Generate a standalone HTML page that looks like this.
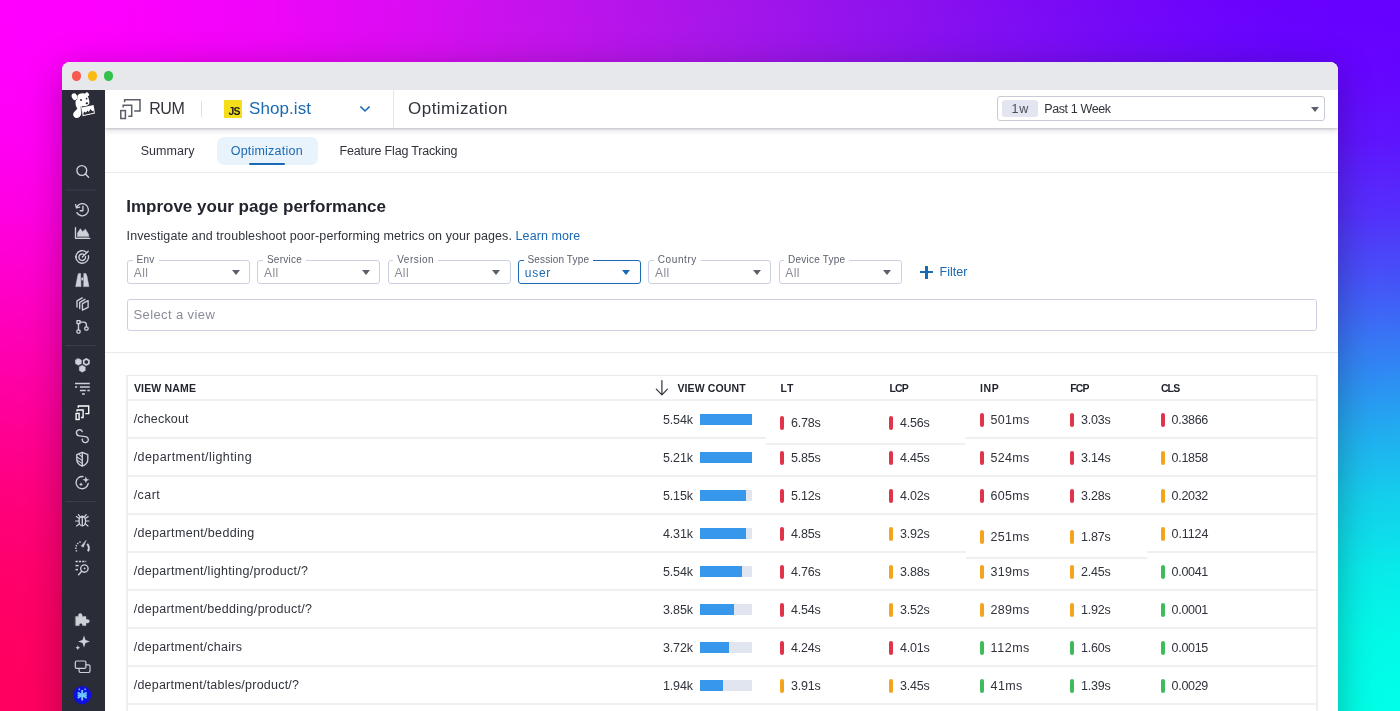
<!DOCTYPE html>
<html lang="en">
<head>
<meta charset="utf-8">
<title>RUM Optimization</title>
<style>
*{box-sizing:border-box;margin:0;padding:0}
html,body{width:1400px;height:711px;overflow:hidden}
body{position:relative;font-family:"Liberation Sans",sans-serif;color:#22252e;background:#ff00af}
.bgL{position:absolute;left:0;top:0;width:1400px;height:711px;background:linear-gradient(to bottom,#ff00ff 0%,#ff00fc 10%,#ff00f2 20%,#ff00e1 30%,#ff00c9 40%,#ff00af 50%,#ff0095 60%,#ff007d 70%,#ff006c 80%,#ff0062 90%,#ff005f 100%)}
.bgR{position:absolute;left:0;top:0;width:1400px;height:711px;background:linear-gradient(to bottom,#6600ff 0%,#6405ff 10%,#5e15fd 20%,#5330fb 30%,#4455f7 40%,#3380f4 50%,#22aaf0 60%,#13cfec 70%,#08eaea 80%,#02fae8 90%,#00ffe8 100%);
 -webkit-mask-image:linear-gradient(to right,rgba(0,0,0,0.000) 0%,rgba(0,0,0,0.018) 10%,rgba(0,0,0,0.081) 20%,rgba(0,0,0,0.190) 30%,rgba(0,0,0,0.335) 40%,rgba(0,0,0,0.500) 50%,rgba(0,0,0,0.665) 60%,rgba(0,0,0,0.810) 70%,rgba(0,0,0,0.919) 80%,rgba(0,0,0,0.982) 90%,rgba(0,0,0,1.000) 100%);
 mask-image:linear-gradient(to right,rgba(0,0,0,0.000) 0%,rgba(0,0,0,0.018) 10%,rgba(0,0,0,0.081) 20%,rgba(0,0,0,0.190) 30%,rgba(0,0,0,0.335) 40%,rgba(0,0,0,0.500) 50%,rgba(0,0,0,0.665) 60%,rgba(0,0,0,0.810) 70%,rgba(0,0,0,0.919) 80%,rgba(0,0,0,0.982) 90%,rgba(0,0,0,1.000) 100%)}
.bgH{position:absolute;left:0;top:0;width:1400px;height:711px;background:linear-gradient(to right,rgba(128,128,128,0) 6%,rgba(128,128,128,.03) 16%,rgba(128,128,128,.075) 25%,rgba(128,128,128,.14) 37%,rgba(128,128,128,.17) 50%,rgba(128,128,128,.14) 63%,rgba(128,128,128,.075) 76%,rgba(128,128,128,.03) 85%,rgba(128,128,128,0) 95%)}
.win{position:absolute;left:62px;top:62px;width:1276px;height:700px;border-radius:8px 8px 0 0;overflow:hidden;background:#fff;box-shadow:0 8px 36px rgba(0,0,0,.28)}
.pg{position:absolute;left:-62px;top:-62px;width:1400px;height:800px;will-change:transform}
.pg div,.pg svg{position:absolute}
.titlebar{left:62px;top:62px;width:1276px;height:28px;background:#e7e8eb}
.dot{width:9.6px;height:9.6px;border-radius:50%;top:71.2px}
.sidebar{left:62px;top:90px;width:43px;height:700px;background:#2a2d38}
.header{left:105px;top:90px;width:1233px;height:38px;background:#fff;box-shadow:0 1px 2px rgba(20,25,40,.15),0 2px 6px rgba(20,25,40,.17)}
.t{white-space:nowrap}
.fbox{top:260px;width:123px;height:24px;border:1px solid #cbd0e2;border-radius:3px;background:#fff}
.caret{width:0;height:0;border-left:4.5px solid transparent;border-right:4.5px solid transparent;border-top:5px solid #5c606d}
.hline{left:127px;width:1190px;height:2px;background:#eff0f4;margin-top:-1px}
</style>
</head>
<body>
<div class="bgL"></div>
<div class="bgR"></div>
<div class="bgH"></div>
<div class="win"><div class="pg">
  <div class="header"></div>
  <div class="titlebar"></div>
  <div class="dot" style="left:71.5px;background:#f7584f"></div>
  <div class="dot" style="left:87.7px;background:#f9ba12"></div>
  <div class="dot" style="left:103.8px;background:#32c14a"></div>
  <div class="sidebar"></div>
  <!-- header pieces -->
  <div class="hd" style="left:200.5px;top:101px;width:1px;height:16px;background:#dfe1e6"></div>
  <div class="hd" style="left:223.5px;top:100px;width:18.5px;height:18px;background:#f5de19"></div>
  <div class="hd t" style="left:228.6px;top:106.4px;font-size:10.4px;line-height:11px;font-weight:700;color:#1c1c1c;letter-spacing:-.9px">JS</div>
  <div class="hd" style="left:393px;top:90px;width:1px;height:38px;background:#e6e7eb"></div>
  <div class="hd" style="left:997px;top:96px;width:328px;height:25px;border:1px solid #c9cbd4;border-radius:3px;background:#fff"></div>
  <div class="hd" style="left:1002px;top:100px;width:36px;height:17px;border-radius:3px;background:#e3e6f1"></div>
  <div class="hd caret" style="left:1310.5px;top:106.5px"></div>
  <!-- tabs -->
  <div style="left:217px;top:136.5px;width:101px;height:28px;border-radius:7px;background:#e9f3fb"></div>
  <div style="left:249px;top:163px;width:36px;height:2px;background:#1a69b3;border-radius:1px"></div>
  <div style="left:105px;top:172px;width:1233px;height:1px;background:#e9eaee"></div>
  <!-- filters -->
  <div class="fbox" style="left:127px"></div><div class="caret" style="left:231.5px;top:270px"></div>
  <div class="fbox" style="left:257.3px"></div><div class="caret" style="left:361.8px;top:270px"></div>
  <div class="fbox" style="left:387.6px"></div><div class="caret" style="left:492.1px;top:270px"></div>
  <div class="fbox" style="left:517.9px;border-color:#1a69b3"></div><div class="caret" style="left:622.4px;top:270px;border-top-color:#1a69b3"></div>
  <div class="fbox" style="left:648.2px"></div><div class="caret" style="left:752.7px;top:270px"></div>
  <div class="fbox" style="left:778.5px"></div><div class="caret" style="left:883px;top:270px"></div>
  <div style="left:920px;top:271px;width:13px;height:2.4px;background:#1a69b3"></div>
  <div style="left:925.3px;top:265.7px;width:2.4px;height:13px;background:#1a69b3"></div>
  <div style="left:127px;top:299px;width:1190px;height:32px;border:1px solid #cbd0e2;border-radius:3px;background:#fff"></div>
  <div style="left:105px;top:352px;width:1233px;height:1px;background:#e9eaee"></div>
  <!-- table frame -->
  <div style="left:126px;top:375px;width:1192px;height:400px;border:2px solid #eeeff5;border-top:1px solid #e9eaef;border-bottom:none"></div>
  <div class="hline" style="top:400px"></div>
  <div class="hline" style="top:438px"></div>
  <div class="hline" style="top:476px"></div>
  <div class="hline" style="top:514px"></div>
  <div class="hline" style="top:552px"></div>
  <div class="hline" style="top:590px"></div>
  <div class="hline" style="top:628px"></div>
  <div class="hline" style="top:666px"></div>
  <div class="hline" style="top:704px"></div>
  <div style="left:766px;top:401px;width:198.5px;height:41.5px;background:#fff"></div>
  <div style="left:766px;top:442.5px;width:198.5px;height:2px;background:#eff0f4"></div>
  <div style="left:965.5px;top:515px;width:181px;height:41.5px;background:#fff"></div>
  <div style="left:965.5px;top:556.5px;width:181px;height:2px;background:#eff0f4"></div>

<div style="left:700px;top:414.0px;width:52px;height:11px;background:#e1e5f0"></div>
<div style="left:700px;top:414.0px;width:52.0px;height:11px;background:#3797ea"></div>
<div style="left:780.2px;top:415.5px;width:4px;height:14px;border-radius:2px;background:#e0334c"></div>
<div style="left:889.2px;top:415.5px;width:4px;height:14px;border-radius:2px;background:#e0334c"></div>
<div style="left:979.7px;top:412.5px;width:4px;height:14px;border-radius:2px;background:#e0334c"></div>
<div style="left:1070.0px;top:412.5px;width:4px;height:14px;border-radius:2px;background:#e0334c"></div>
<div style="left:1160.7px;top:412.5px;width:4px;height:14px;border-radius:2px;background:#e0334c"></div>
<div style="left:700px;top:452.0px;width:52px;height:11px;background:#e1e5f0"></div>
<div style="left:700px;top:452.0px;width:52.0px;height:11px;background:#3797ea"></div>
<div style="left:780.2px;top:450.5px;width:4px;height:14px;border-radius:2px;background:#e0334c"></div>
<div style="left:889.2px;top:450.5px;width:4px;height:14px;border-radius:2px;background:#e0334c"></div>
<div style="left:979.7px;top:450.5px;width:4px;height:14px;border-radius:2px;background:#e0334c"></div>
<div style="left:1070.0px;top:450.5px;width:4px;height:14px;border-radius:2px;background:#e0334c"></div>
<div style="left:1160.7px;top:450.5px;width:4px;height:14px;border-radius:2px;background:#f3a31c"></div>
<div style="left:700px;top:490.0px;width:52px;height:11px;background:#e1e5f0"></div>
<div style="left:700px;top:490.0px;width:45.8px;height:11px;background:#3797ea"></div>
<div style="left:780.2px;top:488.5px;width:4px;height:14px;border-radius:2px;background:#e0334c"></div>
<div style="left:889.2px;top:488.5px;width:4px;height:14px;border-radius:2px;background:#e0334c"></div>
<div style="left:979.7px;top:488.5px;width:4px;height:14px;border-radius:2px;background:#e0334c"></div>
<div style="left:1070.0px;top:488.5px;width:4px;height:14px;border-radius:2px;background:#e0334c"></div>
<div style="left:1160.7px;top:488.5px;width:4px;height:14px;border-radius:2px;background:#f3a31c"></div>
<div style="left:700px;top:528.0px;width:52px;height:11px;background:#e1e5f0"></div>
<div style="left:700px;top:528.0px;width:45.8px;height:11px;background:#3797ea"></div>
<div style="left:780.2px;top:526.5px;width:4px;height:14px;border-radius:2px;background:#e0334c"></div>
<div style="left:889.2px;top:526.5px;width:4px;height:14px;border-radius:2px;background:#f3a31c"></div>
<div style="left:979.7px;top:529.5px;width:4px;height:14px;border-radius:2px;background:#f3a31c"></div>
<div style="left:1070.0px;top:529.5px;width:4px;height:14px;border-radius:2px;background:#f3a31c"></div>
<div style="left:1160.7px;top:526.5px;width:4px;height:14px;border-radius:2px;background:#f3a31c"></div>
<div style="left:700px;top:566.0px;width:52px;height:11px;background:#e1e5f0"></div>
<div style="left:700px;top:566.0px;width:41.6px;height:11px;background:#3797ea"></div>
<div style="left:780.2px;top:564.5px;width:4px;height:14px;border-radius:2px;background:#e0334c"></div>
<div style="left:889.2px;top:564.5px;width:4px;height:14px;border-radius:2px;background:#f3a31c"></div>
<div style="left:979.7px;top:564.5px;width:4px;height:14px;border-radius:2px;background:#f3a31c"></div>
<div style="left:1070.0px;top:564.5px;width:4px;height:14px;border-radius:2px;background:#f3a31c"></div>
<div style="left:1160.7px;top:564.5px;width:4px;height:14px;border-radius:2px;background:#3fbb5a"></div>
<div style="left:700px;top:604.0px;width:52px;height:11px;background:#e1e5f0"></div>
<div style="left:700px;top:604.0px;width:34.1px;height:11px;background:#3797ea"></div>
<div style="left:780.2px;top:602.5px;width:4px;height:14px;border-radius:2px;background:#e0334c"></div>
<div style="left:889.2px;top:602.5px;width:4px;height:14px;border-radius:2px;background:#f3a31c"></div>
<div style="left:979.7px;top:602.5px;width:4px;height:14px;border-radius:2px;background:#f3a31c"></div>
<div style="left:1070.0px;top:602.5px;width:4px;height:14px;border-radius:2px;background:#f3a31c"></div>
<div style="left:1160.7px;top:602.5px;width:4px;height:14px;border-radius:2px;background:#3fbb5a"></div>
<div style="left:700px;top:642.0px;width:52px;height:11px;background:#e1e5f0"></div>
<div style="left:700px;top:642.0px;width:29.1px;height:11px;background:#3797ea"></div>
<div style="left:780.2px;top:640.5px;width:4px;height:14px;border-radius:2px;background:#e0334c"></div>
<div style="left:889.2px;top:640.5px;width:4px;height:14px;border-radius:2px;background:#e0334c"></div>
<div style="left:979.7px;top:640.5px;width:4px;height:14px;border-radius:2px;background:#3fbb5a"></div>
<div style="left:1070.0px;top:640.5px;width:4px;height:14px;border-radius:2px;background:#3fbb5a"></div>
<div style="left:1160.7px;top:640.5px;width:4px;height:14px;border-radius:2px;background:#3fbb5a"></div>
<div style="left:700px;top:680.0px;width:52px;height:11px;background:#e1e5f0"></div>
<div style="left:700px;top:680.0px;width:23.4px;height:11px;background:#3797ea"></div>
<div style="left:780.2px;top:678.5px;width:4px;height:14px;border-radius:2px;background:#f3a31c"></div>
<div style="left:889.2px;top:678.5px;width:4px;height:14px;border-radius:2px;background:#f3a31c"></div>
<div style="left:979.7px;top:678.5px;width:4px;height:14px;border-radius:2px;background:#3fbb5a"></div>
<div style="left:1070.0px;top:678.5px;width:4px;height:14px;border-radius:2px;background:#3fbb5a"></div>
<div style="left:1160.7px;top:678.5px;width:4px;height:14px;border-radius:2px;background:#3fbb5a"></div>
<div class="t" style="left:149.2px;top:97.9px;font-size:16px;line-height:22px;letter-spacing:-0.42px;color:#30333c;">RUM</div>
<div class="t" style="left:249.0px;top:96.8px;font-size:17px;line-height:24px;letter-spacing:0.08px;color:#1a69b3;">Shop.ist</div>
<div class="t" style="left:408.1px;top:96.7px;font-size:17px;line-height:24px;letter-spacing:0.45px;color:#30333c;">Optimization</div>
<div class="t" style="left:1011.4px;top:99.6px;font-size:12.5px;line-height:18px;letter-spacing:0.87px;color:#4a4e5a;">1w</div>
<div class="t" style="left:1044.2px;top:99.6px;font-size:12.5px;line-height:18px;letter-spacing:-0.38px;color:#30333c;">Past 1 Week</div>
<div class="t" style="left:140.7px;top:141.6px;font-size:12.5px;line-height:18px;letter-spacing:0.06px;color:#30333c;">Summary</div>
<div class="t" style="left:230.7px;top:141.6px;font-size:12.5px;line-height:18px;letter-spacing:0.22px;color:#1a69b3;">Optimization</div>
<div class="t" style="left:339.5px;top:141.6px;font-size:12.5px;line-height:18px;letter-spacing:-0.18px;color:#30333c;">Feature Flag Tracking</div>
<div class="t" style="left:126.2px;top:195.0px;font-size:17px;line-height:24px;letter-spacing:-0.00px;color:#22252e;font-weight:700;">Improve your page performance</div>
<div class="t" style="left:126.6px;top:227.3px;font-size:12.5px;line-height:18px;letter-spacing:0.09px;color:#30333c;">Investigate and troubleshoot poor-performing metrics on your pages.</div>
<div class="t" style="left:515.6px;top:227.3px;font-size:12.5px;line-height:18px;letter-spacing:0.07px;color:#1a69b3;">Learn more</div>
<div class="t" style="left:136.6px;top:253.1px;font-size:10px;line-height:14px;letter-spacing:0.23px;color:#5c606d;background:#fff;padding:0 4px;margin-left:-4px;">Env</div>
<div class="t" style="left:133.8px;top:265.0px;font-size:12px;line-height:17px;letter-spacing:0.43px;color:#8a8d98;">All</div>
<div class="t" style="left:266.9px;top:253.1px;font-size:10px;line-height:14px;letter-spacing:0.27px;color:#5c606d;background:#fff;padding:0 4px;margin-left:-4px;">Service</div>
<div class="t" style="left:264.1px;top:265.0px;font-size:12px;line-height:17px;letter-spacing:0.43px;color:#8a8d98;">All</div>
<div class="t" style="left:397.2px;top:253.1px;font-size:10px;line-height:14px;letter-spacing:0.52px;color:#5c606d;background:#fff;padding:0 4px;margin-left:-4px;">Version</div>
<div class="t" style="left:394.4px;top:265.0px;font-size:12px;line-height:17px;letter-spacing:0.43px;color:#8a8d98;">All</div>
<div class="t" style="left:527.5px;top:253.1px;font-size:10px;line-height:14px;letter-spacing:0.15px;color:#5c606d;background:#fff;padding:0 4px;margin-left:-4px;">Session Type</div>
<div class="t" style="left:524.8px;top:265.0px;font-size:12px;line-height:17px;letter-spacing:0.72px;color:#1a69b3;">user</div>
<div class="t" style="left:657.8px;top:253.1px;font-size:10px;line-height:14px;letter-spacing:0.58px;color:#5c606d;background:#fff;padding:0 4px;margin-left:-4px;">Country</div>
<div class="t" style="left:655.0px;top:265.0px;font-size:12px;line-height:17px;letter-spacing:0.43px;color:#8a8d98;">All</div>
<div class="t" style="left:788.1px;top:253.1px;font-size:10px;line-height:14px;letter-spacing:0.22px;color:#5c606d;background:#fff;padding:0 4px;margin-left:-4px;">Device Type</div>
<div class="t" style="left:785.3px;top:265.0px;font-size:12px;line-height:17px;letter-spacing:0.43px;color:#8a8d98;">All</div>
<div class="t" style="left:939.5px;top:263.0px;font-size:12.5px;line-height:18px;letter-spacing:0.01px;color:#1a69b3;">Filter</div>
<div class="t" style="left:133.5px;top:306.2px;font-size:13px;line-height:18px;letter-spacing:0.39px;color:#8a8d98;">Select a view</div>
<div class="t" style="left:133.9px;top:380.5px;font-size:10.5px;line-height:15px;letter-spacing:0.17px;color:#22252e;font-weight:700;">VIEW NAME</div>
<div class="t" style="left:677.4px;top:380.5px;font-size:10.5px;line-height:15px;letter-spacing:0.13px;color:#22252e;font-weight:700;">VIEW COUNT</div>
<div class="t" style="left:780.4px;top:380.5px;font-size:10.5px;line-height:15px;letter-spacing:0.99px;color:#22252e;font-weight:700;">LT</div>
<div class="t" style="left:889.4px;top:380.5px;font-size:10.5px;line-height:15px;letter-spacing:-0.78px;color:#22252e;font-weight:700;">LCP</div>
<div class="t" style="left:979.9px;top:380.5px;font-size:10.5px;line-height:15px;letter-spacing:0.67px;color:#22252e;font-weight:700;">INP</div>
<div class="t" style="left:1070.2px;top:380.5px;font-size:10.5px;line-height:15px;letter-spacing:-0.88px;color:#22252e;font-weight:700;">FCP</div>
<div class="t" style="left:1160.9px;top:380.5px;font-size:10.5px;line-height:15px;letter-spacing:-0.88px;color:#22252e;font-weight:700;">CLS</div>
<div class="t" style="left:133.7px;top:410.4px;font-size:12.5px;line-height:18px;letter-spacing:0.17px;color:#30333c;">/checkout</div>
<div class="t" style="left:663.0px;top:410.5px;font-size:12.5px;line-height:18px;letter-spacing:-0.16px;color:#30333c;">5.54k</div>
<div class="t" style="left:791.1px;top:413.5px;font-size:12.5px;line-height:18px;letter-spacing:-0.21px;color:#30333c;">6.78s</div>
<div class="t" style="left:900.1px;top:413.5px;font-size:12.5px;line-height:18px;letter-spacing:-0.21px;color:#30333c;">4.56s</div>
<div class="t" style="left:990.6px;top:410.5px;font-size:12.5px;line-height:18px;letter-spacing:0.30px;color:#30333c;">501ms</div>
<div class="t" style="left:1080.9px;top:410.5px;font-size:12.5px;line-height:18px;letter-spacing:-0.21px;color:#30333c;">3.03s</div>
<div class="t" style="left:1171.6px;top:410.5px;font-size:12.5px;line-height:18px;letter-spacing:-0.30px;color:#30333c;">0.3866</div>
<div class="t" style="left:133.7px;top:448.4px;font-size:12.5px;line-height:18px;letter-spacing:0.43px;color:#30333c;">/department/lighting</div>
<div class="t" style="left:663.0px;top:448.5px;font-size:12.5px;line-height:18px;letter-spacing:-0.16px;color:#30333c;">5.21k</div>
<div class="t" style="left:791.1px;top:448.5px;font-size:12.5px;line-height:18px;letter-spacing:-0.21px;color:#30333c;">5.85s</div>
<div class="t" style="left:900.1px;top:448.5px;font-size:12.5px;line-height:18px;letter-spacing:-0.21px;color:#30333c;">4.45s</div>
<div class="t" style="left:990.6px;top:448.5px;font-size:12.5px;line-height:18px;letter-spacing:0.30px;color:#30333c;">524ms</div>
<div class="t" style="left:1080.9px;top:448.5px;font-size:12.5px;line-height:18px;letter-spacing:-0.21px;color:#30333c;">3.14s</div>
<div class="t" style="left:1171.6px;top:448.5px;font-size:12.5px;line-height:18px;letter-spacing:-0.30px;color:#30333c;">0.1858</div>
<div class="t" style="left:133.7px;top:486.4px;font-size:12.5px;line-height:18px;letter-spacing:0.43px;color:#30333c;">/cart</div>
<div class="t" style="left:663.0px;top:486.5px;font-size:12.5px;line-height:18px;letter-spacing:-0.16px;color:#30333c;">5.15k</div>
<div class="t" style="left:791.1px;top:486.5px;font-size:12.5px;line-height:18px;letter-spacing:-0.21px;color:#30333c;">5.12s</div>
<div class="t" style="left:900.1px;top:486.5px;font-size:12.5px;line-height:18px;letter-spacing:-0.21px;color:#30333c;">4.02s</div>
<div class="t" style="left:990.6px;top:486.5px;font-size:12.5px;line-height:18px;letter-spacing:0.30px;color:#30333c;">605ms</div>
<div class="t" style="left:1080.9px;top:486.5px;font-size:12.5px;line-height:18px;letter-spacing:-0.21px;color:#30333c;">3.28s</div>
<div class="t" style="left:1171.6px;top:486.5px;font-size:12.5px;line-height:18px;letter-spacing:-0.30px;color:#30333c;">0.2032</div>
<div class="t" style="left:133.7px;top:524.4px;font-size:12.5px;line-height:18px;letter-spacing:0.33px;color:#30333c;">/department/bedding</div>
<div class="t" style="left:663.0px;top:524.5px;font-size:12.5px;line-height:18px;letter-spacing:-0.16px;color:#30333c;">4.31k</div>
<div class="t" style="left:791.1px;top:524.5px;font-size:12.5px;line-height:18px;letter-spacing:-0.21px;color:#30333c;">4.85s</div>
<div class="t" style="left:900.1px;top:524.5px;font-size:12.5px;line-height:18px;letter-spacing:-0.21px;color:#30333c;">3.92s</div>
<div class="t" style="left:990.6px;top:527.5px;font-size:12.5px;line-height:18px;letter-spacing:0.30px;color:#30333c;">251ms</div>
<div class="t" style="left:1080.9px;top:527.5px;font-size:12.5px;line-height:18px;letter-spacing:-0.21px;color:#30333c;">1.87s</div>
<div class="t" style="left:1171.6px;top:524.5px;font-size:12.5px;line-height:18px;letter-spacing:-0.11px;color:#30333c;">0.1124</div>
<div class="t" style="left:133.7px;top:562.4px;font-size:12.5px;line-height:18px;letter-spacing:0.31px;color:#30333c;">/department/lighting/product/?</div>
<div class="t" style="left:663.0px;top:562.5px;font-size:12.5px;line-height:18px;letter-spacing:-0.16px;color:#30333c;">5.54k</div>
<div class="t" style="left:791.1px;top:562.5px;font-size:12.5px;line-height:18px;letter-spacing:-0.21px;color:#30333c;">4.76s</div>
<div class="t" style="left:900.1px;top:562.5px;font-size:12.5px;line-height:18px;letter-spacing:-0.21px;color:#30333c;">3.88s</div>
<div class="t" style="left:990.6px;top:562.5px;font-size:12.5px;line-height:18px;letter-spacing:0.30px;color:#30333c;">319ms</div>
<div class="t" style="left:1080.9px;top:562.5px;font-size:12.5px;line-height:18px;letter-spacing:-0.21px;color:#30333c;">2.45s</div>
<div class="t" style="left:1171.6px;top:562.5px;font-size:12.5px;line-height:18px;letter-spacing:-0.30px;color:#30333c;">0.0041</div>
<div class="t" style="left:133.7px;top:600.4px;font-size:12.5px;line-height:18px;letter-spacing:0.29px;color:#30333c;">/department/bedding/product/?</div>
<div class="t" style="left:663.0px;top:600.5px;font-size:12.5px;line-height:18px;letter-spacing:-0.16px;color:#30333c;">3.85k</div>
<div class="t" style="left:791.1px;top:600.5px;font-size:12.5px;line-height:18px;letter-spacing:-0.21px;color:#30333c;">4.54s</div>
<div class="t" style="left:900.1px;top:600.5px;font-size:12.5px;line-height:18px;letter-spacing:-0.21px;color:#30333c;">3.52s</div>
<div class="t" style="left:990.6px;top:600.5px;font-size:12.5px;line-height:18px;letter-spacing:0.30px;color:#30333c;">289ms</div>
<div class="t" style="left:1080.9px;top:600.5px;font-size:12.5px;line-height:18px;letter-spacing:-0.21px;color:#30333c;">1.92s</div>
<div class="t" style="left:1171.6px;top:600.5px;font-size:12.5px;line-height:18px;letter-spacing:-0.30px;color:#30333c;">0.0001</div>
<div class="t" style="left:133.7px;top:638.4px;font-size:12.5px;line-height:18px;letter-spacing:0.28px;color:#30333c;">/department/chairs</div>
<div class="t" style="left:663.0px;top:638.5px;font-size:12.5px;line-height:18px;letter-spacing:-0.16px;color:#30333c;">3.72k</div>
<div class="t" style="left:791.1px;top:638.5px;font-size:12.5px;line-height:18px;letter-spacing:-0.21px;color:#30333c;">4.24s</div>
<div class="t" style="left:900.1px;top:638.5px;font-size:12.5px;line-height:18px;letter-spacing:-0.21px;color:#30333c;">4.01s</div>
<div class="t" style="left:990.6px;top:638.5px;font-size:12.5px;line-height:18px;letter-spacing:0.54px;color:#30333c;">112ms</div>
<div class="t" style="left:1080.9px;top:638.5px;font-size:12.5px;line-height:18px;letter-spacing:-0.21px;color:#30333c;">1.60s</div>
<div class="t" style="left:1171.6px;top:638.5px;font-size:12.5px;line-height:18px;letter-spacing:-0.30px;color:#30333c;">0.0015</div>
<div class="t" style="left:133.7px;top:676.4px;font-size:12.5px;line-height:18px;letter-spacing:0.23px;color:#30333c;">/department/tables/product/?</div>
<div class="t" style="left:663.0px;top:676.5px;font-size:12.5px;line-height:18px;letter-spacing:-0.16px;color:#30333c;">1.94k</div>
<div class="t" style="left:791.1px;top:676.5px;font-size:12.5px;line-height:18px;letter-spacing:-0.21px;color:#30333c;">3.91s</div>
<div class="t" style="left:900.1px;top:676.5px;font-size:12.5px;line-height:18px;letter-spacing:-0.21px;color:#30333c;">3.45s</div>
<div class="t" style="left:990.6px;top:676.5px;font-size:12.5px;line-height:18px;letter-spacing:0.39px;color:#30333c;">41ms</div>
<div class="t" style="left:1080.9px;top:676.5px;font-size:12.5px;line-height:18px;letter-spacing:-0.21px;color:#30333c;">1.39s</div>
<div class="t" style="left:1171.6px;top:676.5px;font-size:12.5px;line-height:18px;letter-spacing:-0.30px;color:#30333c;">0.0029</div>
<svg style="left:62px;top:90px" width="43" height="640" viewBox="62 90 43 640" fill="none" stroke="#cfd1d8" stroke-width="1.35" stroke-linecap="round" stroke-linejoin="round">
  <!-- datadog logo -->
  <g stroke="none" fill="#fff">
    <ellipse cx="74.5" cy="96.7" rx="2.7" ry="3.5" transform="rotate(-25 74.5 96.7)"/>
    <path d="M77.6 95.6 C79 93.4 82.6 92.8 84.9 93.8 L86.4 92.3 C87.7 91.9 89 93.4 89.2 95.3 L87.8 96.6 C89 99 89.7 101.6 89.3 103.4 C88.7 105.4 85.4 106.5 82.2 106.1 L81.3 113.6 C80.9 116.6 78.2 118.7 75.6 117.9 C73.1 117.1 72.5 114.3 73.8 112.6 L77.4 108.5 C75.6 106.4 75.2 103.2 75.7 100.6 L77.2 99.6 Z"/>
    <path d="M81.8 107.5 L93.6 105 L94.9 113.5 L82.5 116.2 Z"/>
  </g>
  <g stroke="none" fill="#2a2d38">
    <circle cx="81" cy="99.9" r="1"/><circle cx="86.6" cy="98.7" r=".85"/><ellipse cx="86.9" cy="103.2" rx="1.25" ry="1"/>
    <path d="M83.5 115 L83.4 113 L84.8 111.6 L85.9 112.8 L87.5 110.4 L88.8 112 L90.6 108.9 L92.3 111.2 L93.5 110.4 L93.9 112.8 Z"/>
  </g>
  <path stroke="#2a2d38" stroke-width=".5" d="M80.9 106.6 L81.9 116.6"/>
  <!-- search -->
  <circle cx="81.8" cy="170.5" r="4.9"/><path d="M85.4 174.1 L88.6 177.3"/>
  <path d="M66 190 H96" stroke="#3a3d4a" stroke-width="1"/>
  <!-- history -->
  <path d="M76.6 207.6 A6.1 6.1 0 1 1 76.9 212.6"/><path d="M75.6 204.6 L76.5 207.9 L79.7 207.2" /><path d="M82.9 206.2 V210.7 H80.2"/>
  <!-- area chart -->
  <path d="M75.5 227.6 V238.3 H89.8"/><path fill="#cfd1d8" stroke-width=".6" d="M77.6 236.6 V233 L80.4 228.8 L82.6 231.8 L85.4 229.2 L88.6 234.5 V236.6 Z"/>
  <!-- target -->
  <path d="M86.6 252.4 A6.3 6.3 0 1 0 88.4 255.6"/><path d="M84.3 254.6 A3.3 3.3 0 1 0 85.5 256.7"/><path d="M82.3 257.1 L88.2 251.3"/><circle cx="76" cy="257" r=".9" fill="#cfd1d8" stroke="none"/>
  <!-- binoculars -->
  <g fill="#cfd1d8" stroke-width=".5"><path d="M78.7 273.5 H80.6 L81 286.6 H75.7 L77.6 276.4 Z"/><path d="M84 273.5 H85.9 L87 276.4 L88.9 286.6 H83.6 Z"/><path d="M81.4 277.6 H83.2 V280.4 H81.4 Z" stroke="none"/></g>
  <!-- layers -->
  <path d="M82.4 303.6 L88.1 300.6 V307.4 L82.4 310.2 Z"/><path d="M79.7 308.6 V302.3 L85 299.4"/><path d="M77 307 V300.8 L82.3 297.9"/>
  <!-- git -->
  <rect x="77" y="320.6" width="3" height="3"/><circle cx="78.5" cy="331.6" r="1.7"/><circle cx="86.4" cy="328.6" r="1.8"/><path d="M78.5 323.6 V329.8"/><path d="M80 322.1 H83.6 Q86.4 322.1 86.4 324.8 V326.7"/>
  <path d="M66 345.5 H96" stroke="#3a3d4a" stroke-width="1"/>
  <!-- hex cluster -->
  <g fill="#cfd1d8" stroke-width=".4"><path d="M78.4 358.4 L81.4 360.1 V363.6 L78.4 365.3 L75.4 363.6 V360.1 Z"/><path d="M82.3 365.3 L85.3 367 V370.5 L82.3 372.2 L79.3 370.5 V367 Z"/></g>
  <path stroke-width="1.7" d="M86.3 358.9 L88.9 360.4 V363.4 L86.3 364.9 L83.7 363.4 V360.4 Z"/>
  <!-- filter lines -->
  <g stroke-width="1.5" stroke-linecap="butt"><path d="M75 383.5 H89.8"/><path d="M75 387 H77.2 M79.9 387 H89.8"/><path d="M79.9 390.5 H85.8 M87.3 390.5 H89.8"/><path d="M82 394 H84.8"/></g>
  <!-- rum devices (active) -->
  <g stroke="#fff" stroke-linecap="butt" stroke-linejoin="miter"><path d="M78.3 407.8 V406 H88.7 V413.6 H85.3"/><path d="M77.1 411.6 V410 H83.1 V417.5 H81"/><rect x="76.1" y="413.4" width="3" height="6.1"/></g>
  <!-- synthetics S -->
  <path d="M82.2 431.6 A3 3 0 1 0 79.4 435.8 L85.2 436.7 A3 3 0 1 1 82.3 439.7"/><circle cx="82.4" cy="439.4" r=".8" fill="#cfd1d8" stroke="none"/>
  <!-- shield -->
  <path d="M82.3 452.4 L87.8 454.6 V459.4 C87.8 462.6 85.4 464.9 82.3 466 C79.2 464.9 76.8 462.6 76.8 459.4 V454.6 Z"/><path d="M82.3 452.6 V465.8"/><path d="M77.4 457.2 L82.1 460.4 M77.5 460.4 L82.1 463.4 M78.9 454.4 L82.1 456.8" stroke-width="1.1"/>
  <!-- circle star -->
  <path d="M83 476.6 A6.1 6.1 0 1 0 88.2 483.4"/><path fill="#cfd1d8" stroke="none" d="M85.9 476.3 L86.8 478.9 L89.4 479.8 L86.8 480.7 L85.9 483.3 L85 480.7 L82.4 479.8 L85 478.9 Z"/><path fill="#cfd1d8" stroke="none" d="M81 482.2 L81.6 483.7 L83.1 484.3 L81.6 484.9 L81 486.4 L80.4 484.9 L78.9 484.3 L80.4 483.7 Z"/>
  <path d="M66 501.5 H96" stroke="#3a3d4a" stroke-width="1"/>
  <!-- bug -->
  <ellipse cx="82.3" cy="521" rx="3.3" ry="4.9"/><path d="M82.3 519.5 V525.6"/><path d="M80.3 517.2 L78.4 514.6 M84.3 517.2 L86.2 514.6" stroke-width="1.2"/><path d="M79 521 H75.6 M85.6 521 H89 M79.3 518.6 L76.4 516.6 M85.3 518.6 L88.2 516.6 M79.5 523.8 L76.6 526 M85.1 523.8 L88 526" stroke-width="1.2"/><path fill="#cfd1d8" stroke="none" d="M80.6 517 Q82.3 515.2 84 517 L82.3 519.6 Z"/>
  <!-- gauge -->
  <path d="M76.7 551.3 A6.5 6.5 0 0 1 81.6 541.6" stroke-dasharray="1.3 1.3" stroke-linecap="butt" stroke-width="1.5"/><path d="M87.2 543.8 A6.5 6.5 0 0 1 87.9 551.3" stroke-width="2" stroke-linecap="butt"/><path fill="#cfd1d8" stroke-width=".5" d="M86 540.6 L83.3 547.2 L81.3 546.1 Z"/>
  <!-- list search -->
  <g stroke-width="1.5" stroke-linecap="butt"><path d="M75.5 561.6 H86.2" stroke-dasharray="2.3 1"/><path d="M75.5 565.6 H78.6"/><path d="M75.5 569.6 H78"/></g><circle cx="84.4" cy="568.5" r="3.7"/><path d="M81.7 571.3 L78.6 574.8"/><circle cx="84.6" cy="568.4" r=".9" fill="#cfd1d8" stroke="none"/>
  <!-- puzzle -->
  <path fill="#cfd1d8" stroke-width=".4" d="M75.7 616.6 H78.6 C78 614.9 78.8 613.4 80.3 613.4 C81.8 613.4 82.6 614.9 82 616.6 H86 V619.6 C87.7 619 89.4 619.7 89.4 621.2 C89.4 622.7 87.7 623.4 86 622.8 V625.6 H82.4 C82.8 624.2 82 623.3 80.8 623.3 C79.6 623.3 78.9 624.2 79.3 625.6 H75.7 Z"/>
  <!-- sparkles -->
  <path fill="#cfd1d8" stroke="none" d="M84 635.6 L85.5 640 L89.9 641.5 L85.5 643 L84 647.4 L82.5 643 L78.1 641.5 L82.5 640 Z"/><path fill="#cfd1d8" stroke="none" d="M77.8 645.3 L78.5 647 L80.2 647.7 L78.5 648.4 L77.8 650.1 L77.1 648.4 L75.4 647.7 L77.1 647 Z"/>
  <!-- windows/chat -->
  <rect x="75.3" y="661" width="10.6" height="7.4" rx="1.4" stroke-width="1.2"/><path stroke-width="1.2" d="M86 664.9 H88.6 Q90 664.9 90 666.3 V671.1 Q90 672.5 88.6 672.5 H80.5 Q79.1 672.5 79.1 671.1 V668.6"/>
  <!-- avatar -->
  <circle cx="82.2" cy="695.1" r="9.1" fill="#1010dc" stroke="none"/>
  <g stroke="#6ec8ff" stroke-width="1.9" stroke-linecap="butt"><path d="M82.2 690 V700.4 M77.7 692.5 L86.7 697.9 M86.7 692.5 L77.7 697.9"/></g>
  <g fill="#6ec8ff" stroke="none"><rect x="77.6" y="694.3" width="9.2" height="1.7"/><rect x="78.6" y="688.6" width="1.5" height="1.5"/><rect x="84.4" y="688.6" width="1.5" height="1.5"/></g>
</svg>
<!-- header RUM icon -->
<svg style="left:114px;top:94px" width="36" height="30" viewBox="114 94 36 30" fill="none" stroke="#5b5e68" stroke-width="1.5">
  <path d="M124.6 102.3 V99.8 H140 V111 H134.2"/><path d="M123.2 107.6 V105.3 H131.7 V116.3 H128.3"/><rect x="120.8" y="110.6" width="4.6" height="7.9"/>
</svg>
<!-- chevron -->
<svg style="left:356px;top:102px" width="18" height="14" viewBox="356 102 18 14" fill="none" stroke="#1a69b3" stroke-width="1.5" stroke-linecap="round" stroke-linejoin="round"><path d="M360.8 106.9 L365 111 L369.2 106.9"/></svg>
<!-- sort arrow -->
<svg style="left:652px;top:378px" width="20" height="20" viewBox="652 378 20 20" fill="none" stroke="#30333c" stroke-width="1.2" stroke-linecap="round" stroke-linejoin="round"><path d="M661.9 380.6 V394.6 M656.3 389.2 L661.9 394.8 L667.5 389.2"/></svg>

</div></div>
</body>
</html>
